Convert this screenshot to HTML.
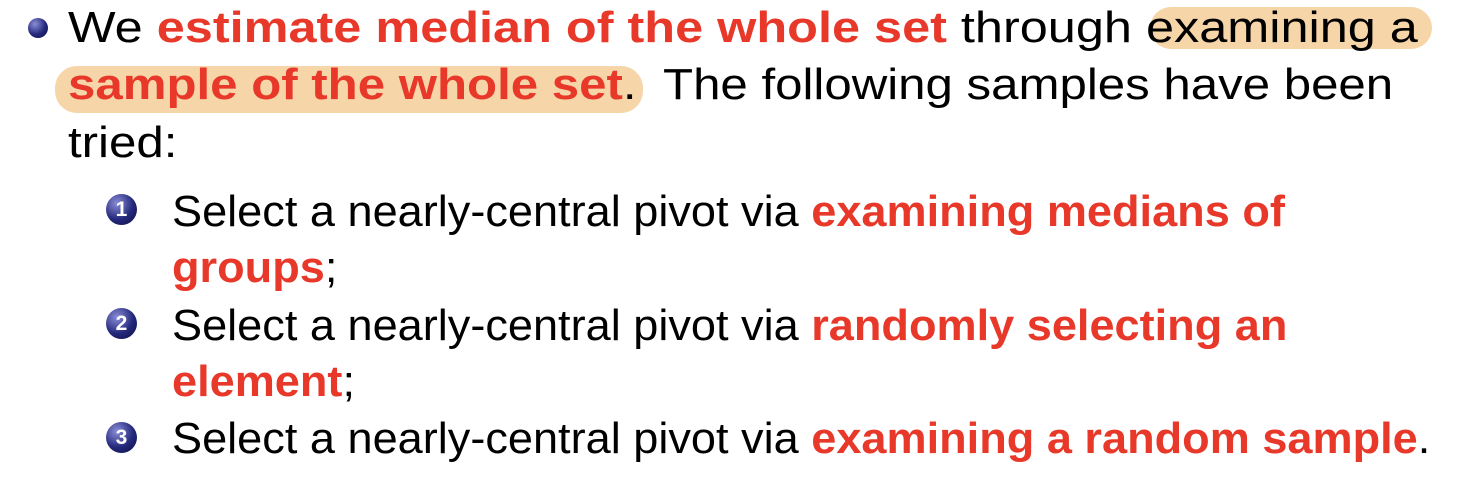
<!DOCTYPE html>
<html><head><style>
body{margin:0;width:1478px;height:478px;background:#fff;overflow:hidden;position:relative;font-family:"Liberation Sans",sans-serif;}
.l{position:absolute;left:0;font-size:44px;white-space:nowrap;transform-origin:left top;color:#000;line-height:1}
.r{color:#e8382a;font-weight:bold}
.hl{position:absolute;background:#f6d5a8;border-radius:22px}
.b{position:absolute;border-radius:50%;background:radial-gradient(circle at 35% 30%,#8a8ed8,#24287a 55%,#0c0e40);}
.n{position:absolute;width:31px;height:31px;border-radius:50%;background:radial-gradient(circle at 35% 30%,#8a8ed8,#24287a 55%,#0c0e40);color:#fff;font-weight:bold;font-size:21px;text-align:center;line-height:31px;font-family:"Liberation Sans",sans-serif}
</style></head><body>
<div class="hl" style="left:1150px;top:7px;width:282px;height:42px"></div>
<div class="hl" style="left:55px;top:66px;width:588px;height:47px"></div>
<div class="b" style="left:28px;top:18px;width:20px;height:20px"></div>
<div class="l" style="left:68px;top:6px;transform:scaleX(1.146)">We <span class="r">estimate median of the whole set</span> through examining a</div>
<div class="l" style="left:68px;top:63px;transform:scaleX(1.118)"><span class="r">sample of the whole set</span>.&nbsp; The following samples have been</div>
<div class="l" style="left:68px;top:121px;transform:scaleX(1.118)">tried:</div>
<div class="n" style="left:106px;top:194px">1</div>
<div class="l" style="left:172px;top:190px;transform:scaleX(1.025)">Select a nearly-central pivot via <span class="r">examining medians of</span></div>
<div class="l" style="left:172px;top:246px;transform:scaleX(1.025)"><span class="r">groups</span>;</div>
<div class="n" style="left:106px;top:308px">2</div>
<div class="l" style="left:172px;top:304px;transform:scaleX(1.025)">Select a nearly-central pivot via <span class="r">randomly selecting an</span></div>
<div class="l" style="left:172px;top:360px;transform:scaleX(1.025)"><span class="r">element</span>;</div>
<div class="n" style="left:106px;top:422px">3</div>
<div class="l" style="left:172px;top:417px;transform:scaleX(1.025)">Select a nearly-central pivot via <span class="r">examining a random sample</span>.</div>
</body></html>
